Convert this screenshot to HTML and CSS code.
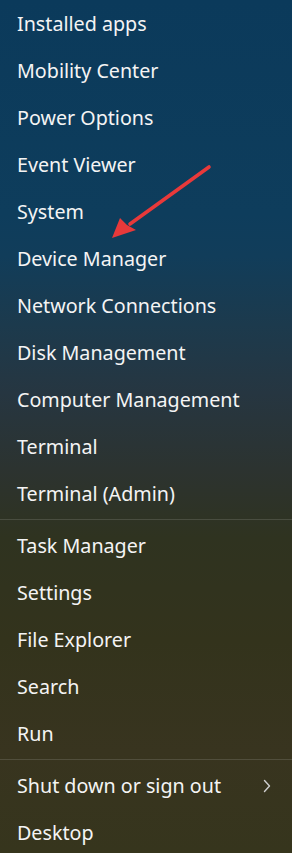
FILE: index.html
```html
<!DOCTYPE html>
<html lang="en">
<head>
<meta charset="utf-8">
<title>Quick Link menu</title>
<link rel="stylesheet" href="styles.css">
</head>
<body>
<div class="menu">
  <ul class="group">
    <li class="item">Installed apps</li>
    <li class="item">Mobility Center</li>
    <li class="item">Power Options</li>
    <li class="item">Event Viewer</li>
    <li class="item">System</li>
    <li class="item">Device Manager</li>
    <li class="item">Network Connections</li>
    <li class="item">Disk Management</li>
    <li class="item">Computer Management</li>
    <li class="item">Terminal</li>
    <li class="item">Terminal (Admin)</li>
  </ul>
  <div class="sep"></div>
  <ul class="group">
    <li class="item">Task Manager</li>
    <li class="item">Settings</li>
    <li class="item">File Explorer</li>
    <li class="item">Search</li>
    <li class="item">Run</li>
  </ul>
  <div class="sep"></div>
  <ul class="group">
    <li class="item has-sub">Shut down or sign out
      <svg class="chev" width="8" height="14" viewBox="0 0 8 14"><path d="M1.5 1.5 L6.5 7 L1.5 12.5" fill="none" stroke="#cfcfcf" stroke-width="1.4" stroke-linecap="round" stroke-linejoin="round"/></svg>
    </li>
    <li class="item">Desktop</li>
  </ul>
  <svg class="arrow" width="292" height="300" viewBox="0 0 292 300">
    <line x1="209" y1="167" x2="130" y2="224" stroke="#e8393a" stroke-width="3.6" stroke-linecap="round"/>
    <polygon points="112,238 120,218 127,225 136,230" fill="#e8393a"/>
  </svg>
</div>
</body>
</html>
```
FILE: styles.css
```css
html, body {
  margin: 0;
  padding: 0;
}
body {
  width: 292px;
  height: 853px;
  overflow: hidden;
  font-family: "Noto Sans", "Open Sans", sans-serif;
}
.menu {
  position: relative;
  height: 853px;
  background: linear-gradient(180deg,
    #0b3a5b 0%,
    #0e3d5c 25%,
    #113d5a 30%,
    #1c3a4d 38%,
    #263641 46%,
    #2c3330 55%,
    #2f3320 63%,
    #33331c 75%,
    #38341f 88%,
    #36351d 100%);
  color: #f4f4f4;
}
.group {
  list-style: none;
  margin: 0;
  padding: 0;
}
.item {
  height: 47px;
  display: flex;
  align-items: center;
  justify-content: space-between;
  padding: 0 21px 0 17px;
  font-size: 19.7px;
  letter-spacing: 0;
  white-space: nowrap;
}
.sep {
  height: 1px;
  margin: 2px 0;
  background: rgba(255, 255, 255, 0.13);
}
.chev {
  display: block;
}
.arrow {
  position: absolute;
  left: 0;
  top: 0;
  pointer-events: none;
}
```
